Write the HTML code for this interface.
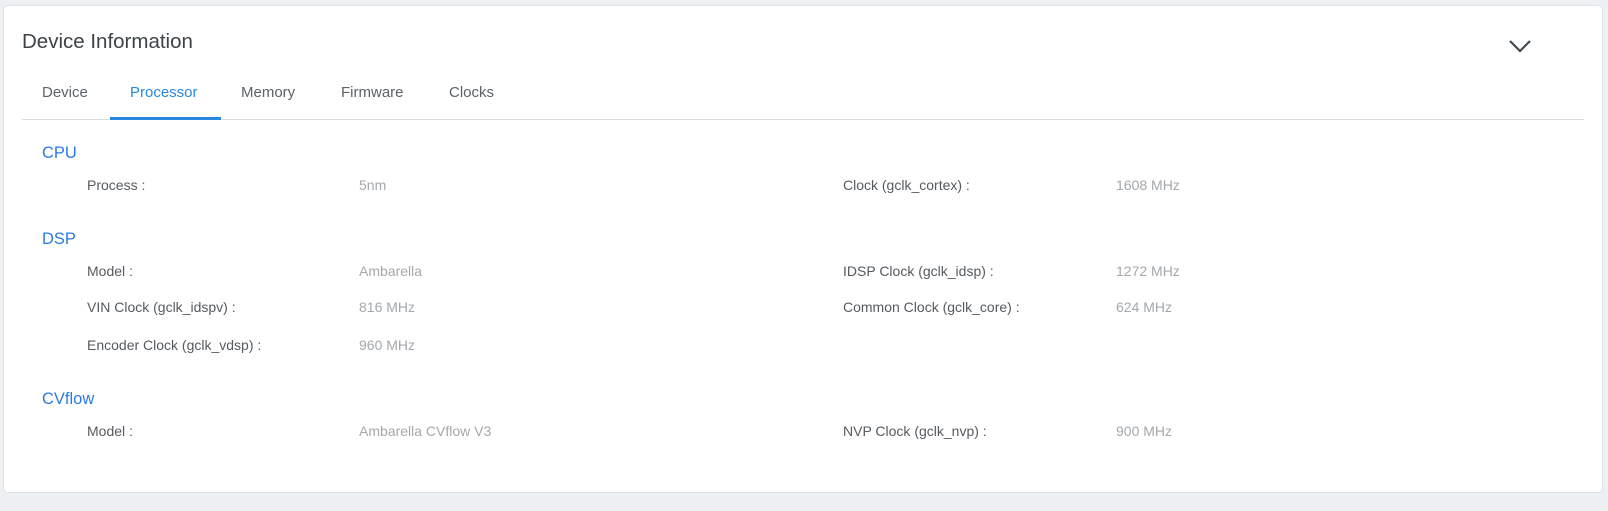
<!DOCTYPE html>
<html><head><style>
body{margin:0;background:#edf1f3;font-family:"Liberation Sans",sans-serif;width:1608px;height:511px;overflow:hidden;position:relative}
.card{position:absolute;left:3px;top:5px;width:1600px;height:488px;background:#fff;border:1px solid #dde3e6;border-radius:5px;box-sizing:border-box}
.a{position:absolute;white-space:nowrap}
.t{font-size:20.5px;color:#3d4449;left:22px;top:30px}
.tab{font-size:15px;color:#5b6369;top:84px}
.line{left:22px;top:119px;width:1562px;height:1px;background:#dcdfe2}
.ul{left:110px;top:117px;width:111px;height:3px;background:#2a87e0}
.h{font-size:16.5px;color:#2a7ae2;left:42px}
.l{font-size:14px;color:#555b60}
.v{font-size:14px;color:#a3a8ac}
</style></head><body>
<div class="card"></div>
<div class="a t">Device Information</div>
<svg class="a" style="left:1508px;top:38px" width="24" height="16"><path d="M2 3 L12 13 L22 3" fill="none" stroke="#3f4a52" stroke-width="2.2"/></svg>
<div class="a tab" style="left:42px">Device</div>
<div class="a tab" style="left:130px;color:#2a87e0">Processor</div>
<div class="a tab" style="left:241px">Memory</div>
<div class="a tab" style="left:341px">Firmware</div>
<div class="a tab" style="left:449px">Clocks</div>
<div class="a line"></div><div class="a ul"></div>
<div class="a h" style="top:144px">CPU</div>
<div class="a l" style="left:87px;top:177px">Process :</div><div class="a v" style="left:359px;top:177px">5nm</div>
<div class="a l" style="left:843px;top:177px">Clock (gclk_cortex) :</div><div class="a v" style="left:1116px;top:177px">1608 MHz</div>
<div class="a h" style="top:230px">DSP</div>
<div class="a l" style="left:87px;top:263px">Model :</div><div class="a v" style="left:359px;top:263px">Ambarella</div>
<div class="a l" style="left:843px;top:263px">IDSP Clock (gclk_idsp) :</div><div class="a v" style="left:1116px;top:263px">1272 MHz</div>
<div class="a l" style="left:87px;top:299px">VIN Clock (gclk_idspv) :</div><div class="a v" style="left:359px;top:299px">816 MHz</div>
<div class="a l" style="left:843px;top:299px">Common Clock (gclk_core) :</div><div class="a v" style="left:1116px;top:299px">624 MHz</div>
<div class="a l" style="left:87px;top:337px">Encoder Clock (gclk_vdsp) :</div><div class="a v" style="left:359px;top:337px">960 MHz</div>
<div class="a h" style="top:390px">CVflow</div>
<div class="a l" style="left:87px;top:423px">Model :</div><div class="a v" style="left:359px;top:423px">Ambarella CVflow V3</div>
<div class="a l" style="left:843px;top:423px">NVP Clock (gclk_nvp) :</div><div class="a v" style="left:1116px;top:423px">900 MHz</div>
</body></html>
